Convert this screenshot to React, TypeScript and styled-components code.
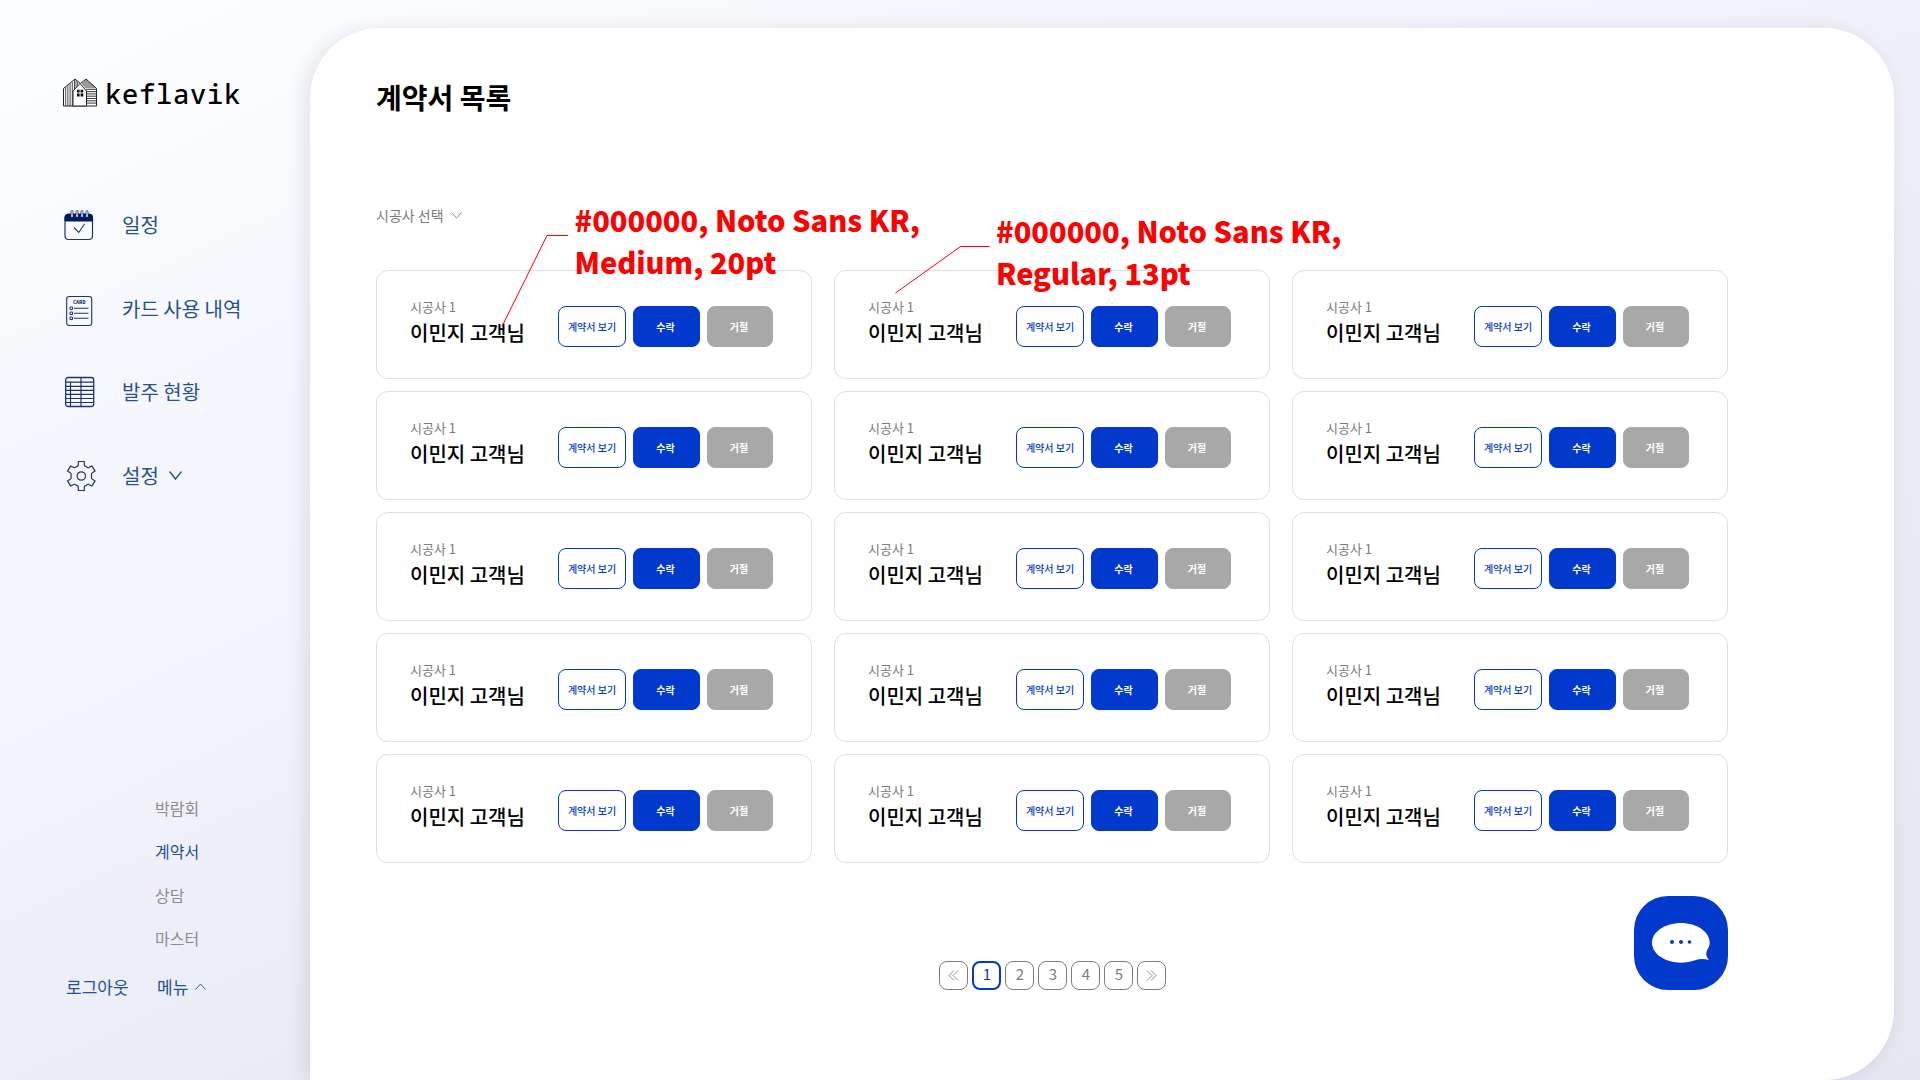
import React from "react";
import styled, { createGlobalStyle } from "styled-components";

const BLUE = "#0039cb";
const NAVY = "#1d3371";
const LINK = "#27508f";

const GlobalStyle = createGlobalStyle`
  * { box-sizing: border-box; }
  body {
    margin: 0;
    font-family: "Noto Sans CJK KR", "Noto Sans", sans-serif;
    color: #000;
  }
  button { font-family: inherit; padding: 0; margin: 0; cursor: pointer; }
  svg { display: block; flex: none; }
`;

const Page = styled.div`
  position: relative;
  display: flex;
  width: 1920px;
  height: 1080px;
  overflow: hidden;
  background: linear-gradient(155deg, #fdfeff 0%, #f1f2fb 42%, #e9ebf5 60%, #e4e6f2 100%);
`;

const Sidebar = styled.aside`
  width: 310px;
  flex: none;
  display: flex;
  flex-direction: column;
  padding-top: 76px;
`;

const Logo = styled.div`
  display: flex;
  align-items: center;
  gap: 7px;
  height: 34px;
  padding-left: 62px;
`;

const LogoText = styled.span`
  padding-top: 2px;
  font-family: "Noto Sans Mono", "DejaVu Sans Mono", monospace;
  font-size: 27px;
  font-weight: 500;
  line-height: 34px;
  letter-spacing: 0.8px;
`;

const Nav = styled.nav`
  display: flex;
  flex-direction: column;
  margin-top: 73px;
`;

const NavItem = styled.a`
  display: flex;
  align-items: center;
  height: 83.7px;
  color: ${LINK};
  font-size: 20px;
  line-height: 30px;
`;

const NavIcon = styled.span<{ $drop?: number }>`
  display: flex;
  width: 60px;
  margin-left: 62px;
  padding-top: ${(p) => (p.$drop ?? 0) * 2}px;
`;

const NavChevron = styled.span`
  margin-left: 10px;
`;

const SubMenu = styled.div`
  display: flex;
  flex-direction: column;
  margin-top: 269.2px;
  padding-left: 155px;
`;

const SubItem = styled.a<{ $active?: boolean }>`
  font-size: 16px;
  line-height: 43.4px;
  color: ${(p) => (p.$active ? LINK : "#8b8b8b")};
`;

const Footer = styled.div`
  display: flex;
  align-items: center;
  margin-top: 11px;
  padding-left: 66px;
  height: 30px;
  color: ${LINK};
  font-size: 17px;
  line-height: 30px;
`;

const FooterMenu = styled.span`
  display: flex;
  align-items: center;
  gap: 7px;
  margin-left: 28.5px;
`;

const Panel = styled.main`
  display: flex;
  flex-direction: column;
  width: 1584px;
  height: 1052px;
  margin-top: 28px;
  padding: 48px 166px 0 66px;
  background: #fff;
  border-radius: 70px 70px 70px 0;
  box-shadow: -5px 2px 20px rgba(20, 20, 50, 0.1);
`;

const Title = styled.h1`
  margin: 0;
  font-size: 28px;
  font-weight: 700;
  line-height: 43px;
`;

const Filter = styled.div`
  display: flex;
  align-items: center;
  gap: 7px;
  height: 24px;
  margin-top: 84px;
  color: #7b7b7b;
  font-size: 14px;
  line-height: 24px;
`;

const Grid = styled.div`
  display: grid;
  grid-template-columns: repeat(3, 436px);
  grid-auto-rows: 109px;
  gap: 12px 22px;
  margin-top: 43px;
`;

const Card = styled.article`
  display: flex;
  justify-content: space-between;
  padding: 25px 38px 0 33px;
  border: 1px solid #dedede;
  border-radius: 12px;
`;

const Vendor = styled.div`
  font-size: 13px;
  line-height: 22px;
  color: #7b7b7b;
`;

const Customer = styled.div`
  font-size: 20px;
  font-weight: 500;
  line-height: 30px;
`;

const Actions = styled.div`
  display: flex;
  gap: 7px;
  padding-top: 10px;
`;

const Action = styled.button<{ $kind: "view" | "accept" | "reject" }>`
  width: ${(p) => ({ view: 68, accept: 67, reject: 66 })[p.$kind]}px;
  height: 41px;
  border-radius: 8px;
  border: 1px solid ${(p) => (p.$kind === "reject" ? "#a8a8a8" : BLUE)};
  background: ${(p) => ({ view: "#fff", accept: BLUE, reject: "#a8a8a8" })[p.$kind]};
  color: ${(p) => (p.$kind === "view" ? BLUE : "#fff")};
  font-size: 10px;
  font-weight: ${(p) => (p.$kind === "view" ? 500 : 700)};
  padding-right: ${(p) => (p.$kind === "view" ? 0 : 2)}px;
  white-space: nowrap;
`;

const BottomBar = styled.div`
  display: flex;
  align-items: flex-end;
  justify-content: space-between;
  margin-top: 33px;
  padding-left: 563px;
`;

const Pager = styled.div`
  display: flex;
  gap: 4px;
`;

const PageButton = styled.button<{ $active?: boolean }>`
  display: flex;
  align-items: center;
  justify-content: center;
  width: 29px;
  height: 29px;
  border: ${(p) => (p.$active ? `2px solid ${BLUE}` : "1px solid #7d7d7d")};
  border-radius: 8px;
  background: #fff;
  color: ${(p) => (p.$active ? BLUE : "#7d7d7d")};
  font-size: 15px;
  line-height: 20px;
`;

const PageNumber = styled.span`
  padding: 0 0 3px 1px;
`;

const ChatButton = styled.button`
  width: 94px;
  height: 94px;
  border: 0;
  border-radius: 34px;
  background: ${BLUE};
`;

const Note = styled.div<{ $x: number; $y: number }>`
  position: absolute;
  left: ${(p) => p.$x}px;
  top: ${(p) => p.$y}px;
  color: #f00;
  font-size: 29px;
  font-weight: 900;
  line-height: 42px;
  white-space: nowrap;
`;

const Leaders = styled.svg`
  position: absolute;
  left: 0;
  top: 0;
  pointer-events: none;
`;

const HouseLogo = () => (
  <svg width="36" height="30" viewBox="0 0 36 30" fill="none" stroke="#222" strokeWidth="1">
    <path d="M1.5 28V10.5L13 1l5.5 4.500L24 1l10.500 9.500V28Z" strokeLinejoin="round" />
    <path d="M3.700 9v19M5.900 7.200V28M8.100 5.500V28M10.300 3.800V28M12.500 2v12" strokeWidth=".8" />
    <path d="M14 2.200v10M15.700 3.500v7" strokeWidth=".8" />
    <path d="M22 3h4M20 5h8.500M20.500 7h10.500M22.500 9h10.500M24 11.300h10.500M24.800 13.600h9.700M24.800 15.900h9.700M24.800 18.200h9.700M24.800 20.500h9.700M24.800 22.800h9.700M24.800 25.100h9.700" strokeWidth=".9" />
    <path d="M11 28V13l7-7.500L24.500 13v15Z" fill="#fbfcff" />
    <path d="M15 11.800h2.600v2.800H15zM18.600 11.800h2.600v2.800h-2.600zM15 15.600h2.600v2.800H15zM18.600 15.600h2.600v2.800h-2.600z" fill="#000" stroke="none" />
  </svg>
);

const CalendarIcon = () => (
  <svg width="34" height="32" viewBox="0 0 34 32" fill="none" stroke={NAVY}>
    <rect x="3" y="5.500" width="27.500" height="25" rx="3.500" strokeWidth="1.200" />
    <path d="M3 12V8.500a3.500 3.500 0 0 1 3.500-3.500H27a3.500 3.500 0 0 1 3.500 3.500V12Z" fill="#001a5e" stroke="#001a5e" />
    <path d="M10 7V2.500M15 7V2.500M20 7V2.500M25 7V2.500" stroke="#e8ebf5" strokeWidth="2" strokeLinecap="round" />
    <path d="M9 6.500V2.500a1 1 0 0 1 2 0v4M14 6.500V2.500a1 1 0 0 1 2 0v4M19 6.500V2.500a1 1 0 0 1 2 0v4M24 6.500V2.500a1 1 0 0 1 2 0v4" strokeWidth=".8" />
    <path d="M12 18.500l4.800 5L22.500 15" strokeWidth="1.100" />
  </svg>
);

const CardText = styled.text`
  font-size: 4.6px;
  font-weight: 900;
  fill: ${NAVY};
  stroke: none;
`;

const CardIcon = () => (
  <svg width="34" height="32" viewBox="0 0 34 32" fill="none" stroke={NAVY}>
    <rect x="4.700" y="1.500" width="25" height="29" rx="2.500" strokeWidth="1.100" />
    <CardText x="17.300" y="9.200" textAnchor="middle">CARD</CardText>
    <path d="M12 13.300h14.500M12 18.200h14.500M12 23.300h14.500" strokeWidth="1.100" />
    <path d="M8 12h2.500v2.500H8zM8 17h2.500v2.500H8zM8 22h2.500v2.500H8z" strokeWidth="1" />
  </svg>
);

const TableIcon = () => (
  <svg width="34" height="32" viewBox="0 0 34 32" fill="none" stroke={NAVY}>
    <rect x="3.700" y="1.500" width="28" height="29" rx="2.500" strokeWidth="1.300" />
    <path d="M4 6.200h27.500M4 10.300h27.500M4 14.300h27.500M4 18.400h27.500M4 22.500h27.500M4 26.500h27.500M8.500 6.200V30M19 2v28" strokeWidth="1.200" />
  </svg>
);

const GearIcon = () => (
  <svg width="38" height="32" viewBox="0 0 38 32" fill="none" stroke={NAVY} strokeWidth="1.200" strokeLinejoin="round">
    <path d="M16.300 1.500h6v3.600q0 .7.700 1l2.600 1.500q.7.400 1.300 0l3-1.700 3.200 5.200-3 1.800q-.6.400-.6 1v4.200q0 .6.600 1l3 1.800-3.200 5.200-3-1.700q-.6-.4-1.300 0L23 25.900q-.7.300-.7 1v3.600h-6v-3.600q0-.7-.7-1L13 24.400q-.7-.4-1.300 0l-3 1.700-3.200-5.200 3-1.800q.6-.4.6-1v-4.200q0-.6-.6-1l-3-1.800 3.200-5.200 3 1.700q.6.400 1.300 0l2.600-1.500q.7-.3.700-1Z" />
    <circle cx="19.300" cy="16" r="4.200" />
  </svg>
);

const Chevron = ({ w, h, up, stroke }: { w: number; h: number; up?: boolean; stroke: number }) => (
  <svg width={w} height={h} viewBox={`0 0 ${w} ${h}`} fill="none" stroke="currentColor" strokeWidth={stroke}>
    <path d={up ? `M.5 ${h - 0.5}L${w / 2} 1L${w - 0.5} ${h - 0.5}` : `M.5 .5L${w / 2} ${h - 1}L${w - 0.5} .5`} />
  </svg>
);

const DoubleChevron = ({ right }: { right?: boolean }) => (
  <svg width="11" height="12" viewBox="0 0 11 12" fill="none" stroke="currentColor" strokeWidth=".9">
    <path d={right ? "M1 .5l5 5-5 5M5 .5l5 5-5 5" : "M6 .5L1 5.500l5 5M10 .5L5 5.500l5 5"} />
  </svg>
);

const ChatIcon = () => (
  <svg width="94" height="94" viewBox="0 0 94 94">
    <path
      fill="#fff"
      d="M47 27C31 27 18 35.800 18 46.800S31 66.700 47 66.700c5 0 9.500-1 14-2.500 4.500-1.500 9-1.800 14-.2-3-3-3.500-7-1.500-10.500 1.500-2.500 2.200-4.500 2.200-6.700C75.700 35.800 63 27 47 27Z"
    />
    <g fill={BLUE}>
      <circle cx="38" cy="46" r="2" />
      <circle cx="47" cy="46" r="2" />
      <circle cx="55.500" cy="46" r="1.800" />
    </g>
  </svg>
);

const navItems = [
  { label: "일정", icon: <CalendarIcon />, drop: 0 },
  { label: "카드 사용 내역", icon: <CardIcon />, drop: 2 },
  { label: "발주 현황", icon: <TableIcon />, drop: 0 },
  { label: "설정", icon: <GearIcon />, drop: 0, chevron: true },
];

const subItems = ["박람회", "계약서", "상담", "마스터"];

const contracts = Array.from({ length: 15 }, (_, id) => ({ id, vendor: "시공사 1", customer: "이민지 고객님" }));

export default function App() {
  return (
    <Page>
      <GlobalStyle />
      <Sidebar>
        <Logo>
          <HouseLogo />
          <LogoText>keflavik</LogoText>
        </Logo>
        <Nav>
          {navItems.map((item) => (
            <NavItem key={item.label}>
              <NavIcon $drop={item.drop}>{item.icon}</NavIcon>
              {item.label}
              {item.chevron && (
                <NavChevron>
                  <Chevron w={13} h={9} stroke={1.5} />
                </NavChevron>
              )}
            </NavItem>
          ))}
        </Nav>
        <SubMenu>
          {subItems.map((label) => (
            <SubItem key={label} $active={label === "계약서"}>
              {label}
            </SubItem>
          ))}
        </SubMenu>
        <Footer>
          로그아웃
          <FooterMenu>
            메뉴
            <Chevron w={11} h={7} up stroke={0.9} />
          </FooterMenu>
        </Footer>
      </Sidebar>

      <Panel>
        <Title>계약서 목록</Title>
        <Filter>
          시공사 선택
          <Chevron w={11} h={7} stroke={0.9} />
        </Filter>
        <Grid>
          {contracts.map((c) => (
            <Card key={c.id}>
              <div>
                <Vendor>{c.vendor}</Vendor>
                <Customer>{c.customer}</Customer>
              </div>
              <Actions>
                <Action $kind="view">계약서 보기</Action>
                <Action $kind="accept">수락</Action>
                <Action $kind="reject">거절</Action>
              </Actions>
            </Card>
          ))}
        </Grid>
        <BottomBar>
          <Pager>
            <PageButton>
              <DoubleChevron />
            </PageButton>
            {[1, 2, 3, 4, 5].map((n) => (
              <PageButton key={n} $active={n === 1}>
                <PageNumber>{n}</PageNumber>
              </PageButton>
            ))}
            <PageButton>
              <DoubleChevron right />
            </PageButton>
          </Pager>
          <ChatButton>
            <ChatIcon />
          </ChatButton>
        </BottomBar>
      </Panel>

      <Leaders width="1920" height="400" viewBox="0 0 1920 400" fill="none" stroke="#f00" strokeWidth="1">
        <path d="M502 326.500L547 235.500H568" />
        <path d="M895.500 293L960.500 246.500H989.500" />
      </Leaders>
      <Note $x={574.5} $y={198}>
        #000000, Noto Sans KR,
        <br />
        Medium, 20pt
      </Note>
      <Note $x={996} $y={209}>
        #000000, Noto Sans KR,
        <br />
        Regular, 13pt
      </Note>
    </Page>
  );
}
